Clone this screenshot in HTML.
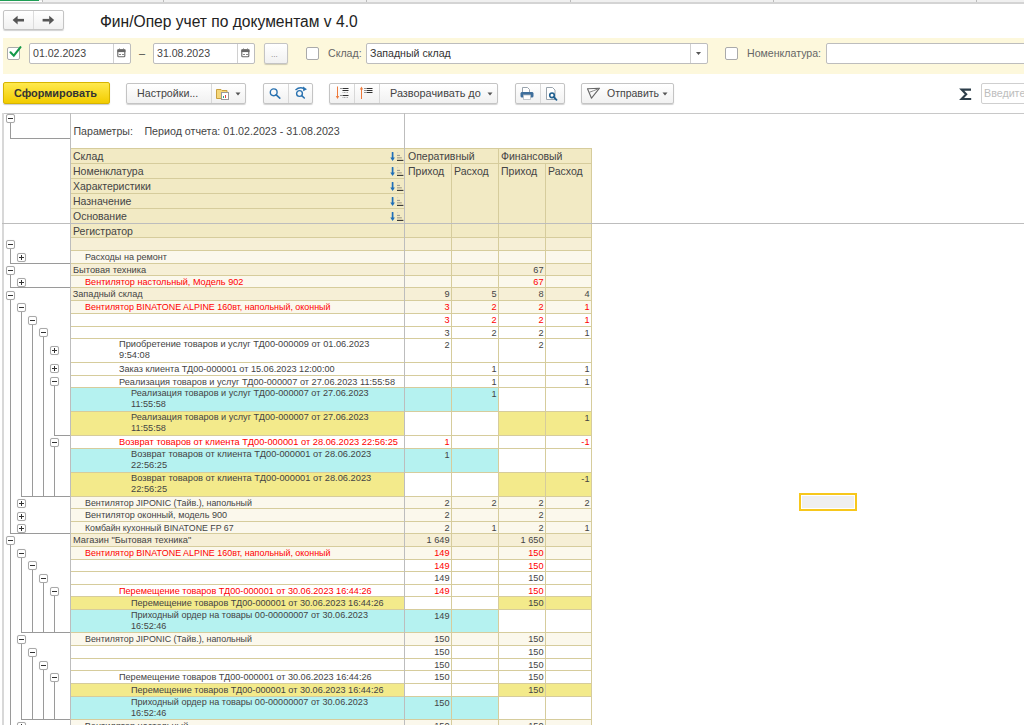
<!DOCTYPE html><html><head><meta charset="utf-8"><style>
html,body{margin:0;padding:0;width:1024px;height:725px;overflow:hidden;background:#fff;position:relative;font-family:"Liberation Sans",sans-serif;}
.a{position:absolute;box-sizing:border-box;}
.t{position:absolute;white-space:pre;line-height:1;}
.btn{position:absolute;box-sizing:border-box;border:1px solid #c4c4c4;border-radius:2px;background:linear-gradient(#ffffff,#f1f1f1);box-shadow:0 1px 1px rgba(0,0,0,0.18);}
.inp{position:absolute;box-sizing:border-box;border:1px solid #bdbdbd;border-radius:2px;background:#fff;}
.chk{position:absolute;box-sizing:border-box;border:1px solid #aaa;border-radius:2px;background:#fff;width:13px;height:13px;}
.tb{position:absolute;box-sizing:border-box;width:9px;height:9px;border:1px solid #a9a9a9;border-radius:2px;background:#fff;box-shadow:0 0 1px rgba(0,0,0,.15);}
.tb i{position:absolute;left:1px;top:3px;width:5px;height:1px;background:#333;}
.tb b{position:absolute;left:3px;top:1px;width:1px;height:5px;background:#333;}
</style></head><body>

<div class="a" style="left:0px;top:0px;width:1024px;height:2px;background:#f0f0f0;"></div>
<div class="a" style="left:0px;top:0px;width:39px;height:1.5px;background:#1f9e55;"></div>
<div class="a" style="left:0px;top:1px;width:42px;height:1px;background:#ffffff;"></div>
<div class="a" style="left:42px;top:0px;width:1px;height:3px;background:#bcbcbc;"></div>
<div class="a" style="left:163px;top:0px;width:1px;height:3px;background:#bcbcbc;"></div>
<div class="a" style="left:366px;top:0px;width:1px;height:3px;background:#bcbcbc;"></div>
<div class="a" style="left:570px;top:0px;width:1px;height:3px;background:#bcbcbc;"></div>
<div class="a" style="left:773px;top:0px;width:1px;height:3px;background:#bcbcbc;"></div>
<div class="a" style="left:976px;top:0px;width:1px;height:3px;background:#bcbcbc;"></div>
<div class="a" style="left:0px;top:2px;width:1024px;height:2px;background:#d4d4d4;"></div>
<div class="btn" style="left:3px;top:10px;width:61px;height:20px;"></div>
<div class="a" style="left:33px;top:11px;width:1px;height:18px;background:#dcdcdc;"></div>
<svg class="a" style="left:10px;top:14px" width="50" height="12" viewBox="0 0 50 12">
<path d="M2.6 6.1 L7.6 1.8 V10.4 Z" fill="#555"/><rect x="7" y="4.9" width="7" height="2.6" fill="#555"/>
<path d="M44.2 6.1 L39.2 1.8 V10.4 Z" fill="#555"/><rect x="32.6" y="4.9" width="7" height="2.6" fill="#555"/>
</svg>
<div class="t" style="left:100px;top:13.5px;font-size:15.6px;color:#222;">Фин/Опер учет по документам v 4.0</div>
<div class="a" style="left:3px;top:38px;width:1021px;height:36px;background:#fdf8dc;"></div>
<div class="chk" style="left:7px;top:47px;width:13px;height:13px;"></div>
<svg class="a" style="left:9px;top:44px" width="14" height="14" viewBox="0 0 14 14"><path d="M1.5 8.3 L4.8 11.7 L11.5 3.2" stroke="#14994a" stroke-width="2.1" fill="none" stroke-linecap="round"/></svg>
<div class="inp" style="left:29px;top:43px;width:102px;height:21px;"></div>
<div class="a" style="left:113px;top:44px;width:1px;height:19px;background:#d0d0d0;"></div>
<div class="t" style="left:33px;top:48px;font-size:10.6px;color:#444;">01.02.2023</div>
<div class="t" style="left:139px;top:48px;font-size:11px;color:#444;">–</div>
<div class="inp" style="left:153px;top:43px;width:102px;height:21px;"></div>
<div class="a" style="left:237px;top:44px;width:1px;height:19px;background:#d0d0d0;"></div>
<div class="t" style="left:157px;top:48px;font-size:10.6px;color:#444;">31.08.2023</div>
<svg class="a" style="left:117px;top:48px" width="9" height="10" viewBox="0 0 9 10"><rect x="0.8" y="1.8" width="7" height="7" rx="0.8" fill="#fff" stroke="#666" stroke-width="1.1"/><rect x="0.5" y="1.5" width="8" height="2.6" fill="#666"/><path d="M2.5 0.5V2M6.5 0.5V2" stroke="#777"/><path d="M2 6.5h2M5 6.5h2" stroke="#888" stroke-width="1"/></svg>
<svg class="a" style="left:241px;top:48px" width="9" height="10" viewBox="0 0 9 10"><rect x="0.8" y="1.8" width="7" height="7" rx="0.8" fill="#fff" stroke="#666" stroke-width="1.1"/><rect x="0.5" y="1.5" width="8" height="2.6" fill="#666"/><path d="M2.5 0.5V2M6.5 0.5V2" stroke="#777"/><path d="M2 6.5h2M5 6.5h2" stroke="#888" stroke-width="1"/></svg>
<div class="btn" style="left:264px;top:43px;width:24px;height:21px;"></div>
<div class="t" style="left:271px;top:51px;font-size:8px;color:#777;">...</div>
<div class="chk" style="left:306px;top:47px;"></div>
<div class="t" style="left:328px;top:48px;font-size:10.6px;color:#666;">Склад:</div>
<div class="inp" style="left:366px;top:43px;width:342px;height:21px;"></div>
<div class="a" style="left:690px;top:44px;width:1px;height:19px;background:#d0d0d0;"></div>
<div class="t" style="left:370px;top:48px;font-size:10.6px;color:#333;">Западный склад</div>
<svg class="a" style="left:696px;top:52px" width="5" height="3" viewBox="0 0 5 3"><path d="M0 0H5L2.5 3Z" fill="#555"/></svg>
<div class="chk" style="left:725px;top:47px;"></div>
<div class="t" style="left:747px;top:48px;font-size:10.6px;color:#666;">Номенклатура:</div>
<div class="inp" style="left:826px;top:43px;width:220px;height:21px;"></div>
<div class="a" style="left:3px;top:82px;width:107px;height:22px;border:1px solid #d6b400;border-radius:2px;background:linear-gradient(#ffe94d,#f2cc00);box-shadow:0 1px 1px rgba(0,0,0,.2)"></div>
<div class="t" style="left:14px;top:88px;font-size:10.9px;color:#333;font-weight:bold;">Сформировать</div>
<div class="btn" style="left:126px;top:83px;width:120px;height:21px;"></div>
<div class="a" style="left:211px;top:84px;width:1px;height:19px;background:#d8d8d8;"></div>
<div class="t" style="left:137px;top:88px;font-size:10.7px;color:#444;">Настройки...</div>
<svg class="a" style="left:216px;top:87px" width="14" height="13" viewBox="0 0 14 13"><path d="M0.5 2.5H5L6 3.5H11V11.5H0.5Z" fill="#f5d77a" stroke="#c9a040" stroke-width="1"/><rect x="5.5" y="5.5" width="7" height="7" fill="#fff" stroke="#999"/><rect x="7" y="9" width="1" height="2" fill="#2a8"/><rect x="9" y="8" width="1" height="3" fill="#d44"/></svg>
<svg class="a" style="left:235px;top:92px" width="6" height="4" viewBox="0 0 6 4"><path d="M0.5 0.5H5.5L3 3.5Z" fill="#555"/></svg>
<div class="btn" style="left:263px;top:83px;width:50px;height:21px;"></div>
<div class="a" style="left:288px;top:84px;width:1px;height:19px;background:#d8d8d8;"></div>
<svg class="a" style="left:268px;top:86px" width="14" height="14" viewBox="0 0 14 14"><circle cx="5.7" cy="6.3" r="3.4" fill="none" stroke="#2a72b0" stroke-width="1.4"/><path d="M8.2 8.8L11.8 12.2" stroke="#2a72b0" stroke-width="1.6" stroke-linecap="round"/></svg>
<svg class="a" style="left:293px;top:85px" width="16" height="15" viewBox="0 0 16 15"><circle cx="6.5" cy="8.5" r="2.9" fill="none" stroke="#2a72b0" stroke-width="1.4"/><path d="M8.7 10.7L11.3 13" stroke="#2a72b0" stroke-width="1.6" stroke-linecap="round"/><path d="M2.5 5 Q6.5 1.5 11 3.6" fill="none" stroke="#2a72b0" stroke-width="1.4"/><path d="M10 1.6L14 4.2L10.2 6.2Z" fill="#2a72b0"/></svg>
<div class="btn" style="left:329px;top:83px;width:169px;height:21px;"></div>
<div class="a" style="left:354px;top:84px;width:1px;height:19px;background:#d8d8d8;"></div>
<div class="a" style="left:379px;top:84px;width:1px;height:19px;background:#d8d8d8;"></div>
<svg class="a" style="left:334px;top:86px" width="16" height="15" viewBox="0 0 16 15"><path d="M3.5 0.5V11" stroke="#ee7a3c" stroke-width="1"/><path d="M1.8 10L3.5 13L5.2 10Z" fill="#ee7a3c"/><path d="M6.5 2.5h1M8.5 2.5h6M8.5 4.5h6M6.5 9.5h1M8.5 9.5h6" stroke="#333" stroke-width="1"/><path d="M8.5 6.5h6M8.5 11.5h6" stroke="#aaa" stroke-width="1" stroke-dasharray="1 0.5"/></svg>
<svg class="a" style="left:358px;top:86px" width="16" height="15" viewBox="0 0 16 15"><path d="M3.5 2V13" stroke="#ee7a3c" stroke-width="1"/><path d="M1.8 3.5L3.5 0.5L5.2 3.5Z" fill="#ee7a3c"/><path d="M6.5 2.5h1M8.5 2.5h6M6.5 4.5h1M8.5 4.5h6M6.5 6.5h1M8.5 6.5h6" stroke="#333" stroke-width="1"/></svg>
<div class="t" style="left:390px;top:88px;font-size:10.9px;color:#444;">Разворачивать до</div>
<svg class="a" style="left:487px;top:92px" width="6" height="4" viewBox="0 0 6 4"><path d="M0.5 0.5H5.5L3 3.5Z" fill="#555"/></svg>
<div class="btn" style="left:515px;top:83px;width:50px;height:21px;"></div>
<div class="a" style="left:540px;top:84px;width:1px;height:19px;background:#d8d8d8;"></div>
<svg class="a" style="left:520px;top:86px" width="14" height="14" viewBox="0 0 14 14"><path d="M2.5 6V1.5H7.5L9.5 3.5V6" fill="#fff" stroke="#9aa4ad" stroke-width="1"/><path d="M1 6.5H13V11H1Z" fill="#3f6f9c" rx="1"/><rect x="0.5" y="6" width="13" height="5.5" rx="1.6" fill="#3f6f9c"/><rect x="3.5" y="9" width="7" height="4.5" fill="#fff" stroke="#b5bcc2" stroke-width="0.8"/></svg>
<svg class="a" style="left:545px;top:86px" width="14" height="15" viewBox="0 0 14 15"><path d="M1.5 1.5H7.5L10 4V13.5H1.5Z" fill="#fff" stroke="#9aa4ad" stroke-width="1"/><circle cx="7" cy="9.3" r="2.3" fill="none" stroke="#1f5f8f" stroke-width="1.6"/><path d="M8.7 11L11.5 13.8" stroke="#1f5f8f" stroke-width="1.8" stroke-linecap="round"/></svg>
<div class="btn" style="left:581px;top:83px;width:93px;height:21px;"></div>
<svg class="a" style="left:586px;top:87px" width="15" height="13" viewBox="0 0 15 13"><path d="M1.5 1.8L13.5 1.2L5.5 11.2Z" fill="none" stroke="#666" stroke-width="1.1" stroke-linejoin="round"/><path d="M3.6 5.2Q7 4 13 1.5" fill="none" stroke="#777" stroke-width="0.9"/></svg>
<div class="t" style="left:607px;top:88px;font-size:10.5px;color:#444;">Отправить</div>
<svg class="a" style="left:662px;top:92px" width="6" height="4" viewBox="0 0 6 4"><path d="M0.5 0.5H5.5L3 3.5Z" fill="#555"/></svg>
<svg class="a" style="left:959px;top:87px" width="14" height="14" viewBox="0 0 14 14"><path d="M12 2.6H2.6L7.2 7.3L2.6 12H12.2" fill="none" stroke="#2d3e4a" stroke-width="2.1" stroke-linejoin="miter"/></svg>
<div class="inp" style="left:981px;top:83px;width:60px;height:21px;border-color:#cfcfcf"></div>
<div class="t" style="left:984px;top:88px;font-size:10.7px;color:#bdbdbd;">Введите</div>
<div class="a" style="left:2px;top:113px;width:1022px;height:1px;background:#c8c8c8;"></div>
<div class="a" style="left:2px;top:113px;width:2px;height:612px;background:#d8d8d8;"></div>
<div class="a" style="left:70px;top:113px;width:1px;height:612px;background:#bdbdbd;"></div>
<div class="a" style="left:404px;top:113px;width:1px;height:612px;background:#bdbdbd;"></div>
<div class="tb" style="left:6px;top:114px;"><i></i></div>
<div class="a" style="left:10px;top:123px;width:1px;height:15px;background:#9a9a9a;"></div>
<div class="a" style="left:10px;top:138px;width:60px;height:1px;background:#9a9a9a;"></div>
<div class="t" style="left:73.5px;top:125.5px;font-size:10.6px;color:#444;">Параметры:</div>
<div class="t" style="left:144.4px;top:125.5px;font-size:10.7px;color:#444;">Период отчета: 01.02.2023 - 31.08.2023</div>
<div class="a" style="left:71px;top:148px;width:333px;height:89px;background:#f2eac4;"></div>
<div class="a" style="left:405px;top:148px;width:186px;height:89px;background:#f2eac4;"></div>
<div class="a" style="left:71px;top:148px;width:333px;height:1px;background:#d6cc9c;"></div>
<div class="a" style="left:71px;top:163px;width:333px;height:1px;background:#d6cc9c;"></div>
<div class="a" style="left:71px;top:178px;width:333px;height:1px;background:#d6cc9c;"></div>
<div class="a" style="left:71px;top:193px;width:333px;height:1px;background:#d6cc9c;"></div>
<div class="a" style="left:71px;top:208px;width:333px;height:1px;background:#d6cc9c;"></div>
<div class="a" style="left:405px;top:148px;width:186px;height:1px;background:#d6cc9c;"></div>
<div class="a" style="left:405px;top:163px;width:186px;height:1px;background:#d6cc9c;"></div>
<div class="a" style="left:498px;top:148px;width:1px;height:89px;background:#d6cc9c;"></div>
<div class="a" style="left:451px;top:163px;width:1px;height:74px;background:#d6cc9c;"></div>
<div class="a" style="left:545px;top:163px;width:1px;height:74px;background:#d6cc9c;"></div>
<div class="a" style="left:591px;top:148px;width:1px;height:577px;background:#d6cc9c;"></div>
<div class="a" style="left:2px;top:223px;width:1022px;height:1px;background:#bdbdbd;"></div>
<div class="t" style="left:73px;top:150.5px;font-size:10.5px;color:#444;">Склад</div>
<svg class="a" style="left:389px;top:152px" width="15" height="10" viewBox="0 0 15 10"><path d="M3.6 0.7V6.5" stroke="#1f6fb8" stroke-width="1.7" stroke-linecap="round"/><path d="M1.3 5.6L3.6 8.9L5.9 5.6Z" fill="#1f6fb8"/><path d="M8 0.7h1.2" stroke="#ccc" stroke-width="0.9"/><path d="M8 3.4h3" stroke="#888" stroke-width="0.9"/><path d="M8 5.8h4.8" stroke="#b0a990" stroke-width="1.3"/><path d="M8 8.4h6.4" stroke="#333" stroke-width="1.1"/></svg>
<div class="t" style="left:73px;top:165.5px;font-size:10.5px;color:#444;">Номенклатура</div>
<svg class="a" style="left:389px;top:167px" width="15" height="10" viewBox="0 0 15 10"><path d="M3.6 0.7V6.5" stroke="#1f6fb8" stroke-width="1.7" stroke-linecap="round"/><path d="M1.3 5.6L3.6 8.9L5.9 5.6Z" fill="#1f6fb8"/><path d="M8 0.7h1.2" stroke="#ccc" stroke-width="0.9"/><path d="M8 3.4h3" stroke="#888" stroke-width="0.9"/><path d="M8 5.8h4.8" stroke="#b0a990" stroke-width="1.3"/><path d="M8 8.4h6.4" stroke="#333" stroke-width="1.1"/></svg>
<div class="t" style="left:73px;top:180.5px;font-size:10.5px;color:#444;">Характеристики</div>
<svg class="a" style="left:389px;top:182px" width="15" height="10" viewBox="0 0 15 10"><path d="M3.6 0.7V6.5" stroke="#1f6fb8" stroke-width="1.7" stroke-linecap="round"/><path d="M1.3 5.6L3.6 8.9L5.9 5.6Z" fill="#1f6fb8"/><path d="M8 0.7h1.2" stroke="#ccc" stroke-width="0.9"/><path d="M8 3.4h3" stroke="#888" stroke-width="0.9"/><path d="M8 5.8h4.8" stroke="#b0a990" stroke-width="1.3"/><path d="M8 8.4h6.4" stroke="#333" stroke-width="1.1"/></svg>
<div class="t" style="left:73px;top:195.5px;font-size:10.5px;color:#444;">Назначение</div>
<svg class="a" style="left:389px;top:197px" width="15" height="10" viewBox="0 0 15 10"><path d="M3.6 0.7V6.5" stroke="#1f6fb8" stroke-width="1.7" stroke-linecap="round"/><path d="M1.3 5.6L3.6 8.9L5.9 5.6Z" fill="#1f6fb8"/><path d="M8 0.7h1.2" stroke="#ccc" stroke-width="0.9"/><path d="M8 3.4h3" stroke="#888" stroke-width="0.9"/><path d="M8 5.8h4.8" stroke="#b0a990" stroke-width="1.3"/><path d="M8 8.4h6.4" stroke="#333" stroke-width="1.1"/></svg>
<div class="t" style="left:73px;top:210.5px;font-size:10.5px;color:#444;">Основание</div>
<svg class="a" style="left:389px;top:212px" width="15" height="10" viewBox="0 0 15 10"><path d="M3.6 0.7V6.5" stroke="#1f6fb8" stroke-width="1.7" stroke-linecap="round"/><path d="M1.3 5.6L3.6 8.9L5.9 5.6Z" fill="#1f6fb8"/><path d="M8 0.7h1.2" stroke="#ccc" stroke-width="0.9"/><path d="M8 3.4h3" stroke="#888" stroke-width="0.9"/><path d="M8 5.8h4.8" stroke="#b0a990" stroke-width="1.3"/><path d="M8 8.4h6.4" stroke="#333" stroke-width="1.1"/></svg>
<div class="t" style="left:408px;top:150.5px;font-size:10.5px;color:#444;">Оперативный</div>
<div class="t" style="left:501px;top:150.5px;font-size:10.5px;color:#444;">Финансовый</div>
<div class="t" style="left:408px;top:165.5px;font-size:10.5px;color:#444;">Приход</div>
<div class="t" style="left:454px;top:165.5px;font-size:10.5px;color:#444;">Расход</div>
<div class="t" style="left:501px;top:165.5px;font-size:10.5px;color:#444;">Приход</div>
<div class="t" style="left:548px;top:165.5px;font-size:10.5px;color:#444;">Расход</div>
<div class="t" style="left:73px;top:226px;font-size:10.5px;color:#444;">Регистратор</div>
<div class="a" style="left:71px;top:237px;width:333px;height:13px;background:#f6efd6;"></div>
<div class="a" style="left:405px;top:237px;width:46px;height:13px;background:#f6efd6;"></div>
<div class="a" style="left:452px;top:237px;width:46px;height:13px;background:#f6efd6;"></div>
<div class="a" style="left:499px;top:237px;width:46px;height:13px;background:#f6efd6;"></div>
<div class="a" style="left:546px;top:237px;width:45px;height:13px;background:#f6efd6;"></div>
<div class="a" style="left:71px;top:237px;width:333px;height:1px;background:#d6cc9c;"></div>
<div class="a" style="left:405px;top:237px;width:186px;height:1px;background:#d6cc9c;"></div>
<div class="a" style="left:451px;top:237px;width:1px;height:13px;background:#d6cc9c;"></div>
<div class="a" style="left:498px;top:237px;width:1px;height:13px;background:#d6cc9c;"></div>
<div class="a" style="left:545px;top:237px;width:1px;height:13px;background:#d6cc9c;"></div>
<div class="a" style="left:71px;top:250px;width:333px;height:13px;background:#fbf8ec;"></div>
<div class="a" style="left:405px;top:250px;width:46px;height:13px;background:#fbf8ec;"></div>
<div class="a" style="left:452px;top:250px;width:46px;height:13px;background:#fbf8ec;"></div>
<div class="a" style="left:499px;top:250px;width:46px;height:13px;background:#fbf8ec;"></div>
<div class="a" style="left:546px;top:250px;width:45px;height:13px;background:#fbf8ec;"></div>
<div class="a" style="left:71px;top:250px;width:333px;height:1px;background:#d6cc9c;"></div>
<div class="a" style="left:405px;top:250px;width:186px;height:1px;background:#d6cc9c;"></div>
<div class="a" style="left:451px;top:250px;width:1px;height:13px;background:#d6cc9c;"></div>
<div class="a" style="left:498px;top:250px;width:1px;height:13px;background:#d6cc9c;"></div>
<div class="a" style="left:545px;top:250px;width:1px;height:13px;background:#d6cc9c;"></div>
<div class="t" style="left:84.7px;top:252.8px;font-size:9.2px;color:#444444;transform:scale(0.9859,1.06);transform-origin:0 7.8px;">Расходы на ремонт</div>
<div class="a" style="left:71px;top:263px;width:333px;height:12px;background:#f6efd6;"></div>
<div class="a" style="left:405px;top:263px;width:46px;height:12px;background:#f6efd6;"></div>
<div class="a" style="left:452px;top:263px;width:46px;height:12px;background:#f6efd6;"></div>
<div class="a" style="left:499px;top:263px;width:46px;height:12px;background:#f6efd6;"></div>
<div class="a" style="left:546px;top:263px;width:45px;height:12px;background:#f6efd6;"></div>
<div class="a" style="left:71px;top:263px;width:333px;height:1px;background:#d6cc9c;"></div>
<div class="a" style="left:405px;top:263px;width:186px;height:1px;background:#d6cc9c;"></div>
<div class="a" style="left:451px;top:263px;width:1px;height:12px;background:#d6cc9c;"></div>
<div class="a" style="left:498px;top:263px;width:1px;height:12px;background:#d6cc9c;"></div>
<div class="a" style="left:545px;top:263px;width:1px;height:12px;background:#d6cc9c;"></div>
<div class="t" style="left:72.7px;top:265.8px;font-size:9.2px;color:#444444;transform:scale(1.0109,1.06);transform-origin:0 7.8px;">Бытовая техника</div>
<div class="t" style="left:499px;width:44.5px;top:265.8px;font-size:9.2px;color:#444444;text-align:right;transform:scaleY(1.06);transform-origin:0 7.8px">67</div>
<div class="a" style="left:71px;top:275px;width:333px;height:12px;background:#fbf8ec;"></div>
<div class="a" style="left:405px;top:275px;width:46px;height:12px;background:#fbf8ec;"></div>
<div class="a" style="left:452px;top:275px;width:46px;height:12px;background:#fbf8ec;"></div>
<div class="a" style="left:499px;top:275px;width:46px;height:12px;background:#fbf8ec;"></div>
<div class="a" style="left:546px;top:275px;width:45px;height:12px;background:#fbf8ec;"></div>
<div class="a" style="left:71px;top:275px;width:333px;height:1px;background:#d6cc9c;"></div>
<div class="a" style="left:405px;top:275px;width:186px;height:1px;background:#d6cc9c;"></div>
<div class="a" style="left:451px;top:275px;width:1px;height:12px;background:#d6cc9c;"></div>
<div class="a" style="left:498px;top:275px;width:1px;height:12px;background:#d6cc9c;"></div>
<div class="a" style="left:545px;top:275px;width:1px;height:12px;background:#d6cc9c;"></div>
<div class="t" style="left:84.7px;top:277.8px;font-size:9.2px;color:#ff0000;transform:scale(0.9924,1.06);transform-origin:0 7.8px;">Вентилятор настольный, Модель 902</div>
<div class="t" style="left:499px;width:44.5px;top:277.8px;font-size:9.2px;color:#ff0000;text-align:right;transform:scaleY(1.06);transform-origin:0 7.8px">67</div>
<div class="a" style="left:71px;top:287px;width:333px;height:13px;background:#f6efd6;"></div>
<div class="a" style="left:405px;top:287px;width:46px;height:13px;background:#f6efd6;"></div>
<div class="a" style="left:452px;top:287px;width:46px;height:13px;background:#f6efd6;"></div>
<div class="a" style="left:499px;top:287px;width:46px;height:13px;background:#f6efd6;"></div>
<div class="a" style="left:546px;top:287px;width:45px;height:13px;background:#f6efd6;"></div>
<div class="a" style="left:71px;top:287px;width:333px;height:1px;background:#d6cc9c;"></div>
<div class="a" style="left:405px;top:287px;width:186px;height:1px;background:#d6cc9c;"></div>
<div class="a" style="left:451px;top:287px;width:1px;height:13px;background:#d6cc9c;"></div>
<div class="a" style="left:498px;top:287px;width:1px;height:13px;background:#d6cc9c;"></div>
<div class="a" style="left:545px;top:287px;width:1px;height:13px;background:#d6cc9c;"></div>
<div class="t" style="left:72.7px;top:289.8px;font-size:9.2px;color:#444444;transform:scale(1.0000,1.06);transform-origin:0 7.8px;">Западный склад</div>
<div class="t" style="left:405px;width:44.5px;top:289.8px;font-size:9.2px;color:#444444;text-align:right;transform:scaleY(1.06);transform-origin:0 7.8px">9</div>
<div class="t" style="left:452px;width:44.5px;top:289.8px;font-size:9.2px;color:#444444;text-align:right;transform:scaleY(1.06);transform-origin:0 7.8px">5</div>
<div class="t" style="left:499px;width:44.5px;top:289.8px;font-size:9.2px;color:#444444;text-align:right;transform:scaleY(1.06);transform-origin:0 7.8px">8</div>
<div class="t" style="left:546px;width:43.5px;top:289.8px;font-size:9.2px;color:#444444;text-align:right;transform:scaleY(1.06);transform-origin:0 7.8px">4</div>
<div class="a" style="left:71px;top:300px;width:333px;height:13px;background:#fbf8ec;"></div>
<div class="a" style="left:405px;top:300px;width:46px;height:13px;background:#fbf8ec;"></div>
<div class="a" style="left:452px;top:300px;width:46px;height:13px;background:#fbf8ec;"></div>
<div class="a" style="left:499px;top:300px;width:46px;height:13px;background:#fbf8ec;"></div>
<div class="a" style="left:546px;top:300px;width:45px;height:13px;background:#fbf8ec;"></div>
<div class="a" style="left:71px;top:300px;width:333px;height:1px;background:#d6cc9c;"></div>
<div class="a" style="left:405px;top:300px;width:186px;height:1px;background:#d6cc9c;"></div>
<div class="a" style="left:451px;top:300px;width:1px;height:13px;background:#d6cc9c;"></div>
<div class="a" style="left:498px;top:300px;width:1px;height:13px;background:#d6cc9c;"></div>
<div class="a" style="left:545px;top:300px;width:1px;height:13px;background:#d6cc9c;"></div>
<div class="t" style="left:84.7px;top:302.8px;font-size:9.2px;color:#ff0000;transform:scale(0.9707,1.06);transform-origin:0 7.8px;">Вентилятор BINATONE ALPINE 160вт, напольный, оконный</div>
<div class="t" style="left:405px;width:44.5px;top:302.8px;font-size:9.2px;color:#ff0000;text-align:right;transform:scaleY(1.06);transform-origin:0 7.8px">3</div>
<div class="t" style="left:452px;width:44.5px;top:302.8px;font-size:9.2px;color:#ff0000;text-align:right;transform:scaleY(1.06);transform-origin:0 7.8px">2</div>
<div class="t" style="left:499px;width:44.5px;top:302.8px;font-size:9.2px;color:#ff0000;text-align:right;transform:scaleY(1.06);transform-origin:0 7.8px">2</div>
<div class="t" style="left:546px;width:43.5px;top:302.8px;font-size:9.2px;color:#ff0000;text-align:right;transform:scaleY(1.06);transform-origin:0 7.8px">1</div>
<div class="a" style="left:71px;top:313px;width:333px;height:13px;background:#ffffff;"></div>
<div class="a" style="left:405px;top:313px;width:46px;height:13px;background:#ffffff;"></div>
<div class="a" style="left:452px;top:313px;width:46px;height:13px;background:#ffffff;"></div>
<div class="a" style="left:499px;top:313px;width:46px;height:13px;background:#ffffff;"></div>
<div class="a" style="left:546px;top:313px;width:45px;height:13px;background:#ffffff;"></div>
<div class="a" style="left:71px;top:313px;width:333px;height:1px;background:#d6cc9c;"></div>
<div class="a" style="left:405px;top:313px;width:186px;height:1px;background:#d6cc9c;"></div>
<div class="a" style="left:451px;top:313px;width:1px;height:13px;background:#d6cc9c;"></div>
<div class="a" style="left:498px;top:313px;width:1px;height:13px;background:#d6cc9c;"></div>
<div class="a" style="left:545px;top:313px;width:1px;height:13px;background:#d6cc9c;"></div>
<div class="t" style="left:405px;width:44.5px;top:315.8px;font-size:9.2px;color:#ff0000;text-align:right;transform:scaleY(1.06);transform-origin:0 7.8px">3</div>
<div class="t" style="left:452px;width:44.5px;top:315.8px;font-size:9.2px;color:#ff0000;text-align:right;transform:scaleY(1.06);transform-origin:0 7.8px">2</div>
<div class="t" style="left:499px;width:44.5px;top:315.8px;font-size:9.2px;color:#ff0000;text-align:right;transform:scaleY(1.06);transform-origin:0 7.8px">2</div>
<div class="t" style="left:546px;width:43.5px;top:315.8px;font-size:9.2px;color:#ff0000;text-align:right;transform:scaleY(1.06);transform-origin:0 7.8px">1</div>
<div class="a" style="left:71px;top:326px;width:333px;height:12px;background:#ffffff;"></div>
<div class="a" style="left:405px;top:326px;width:46px;height:12px;background:#ffffff;"></div>
<div class="a" style="left:452px;top:326px;width:46px;height:12px;background:#ffffff;"></div>
<div class="a" style="left:499px;top:326px;width:46px;height:12px;background:#ffffff;"></div>
<div class="a" style="left:546px;top:326px;width:45px;height:12px;background:#ffffff;"></div>
<div class="a" style="left:71px;top:326px;width:333px;height:1px;background:#d6cc9c;"></div>
<div class="a" style="left:405px;top:326px;width:186px;height:1px;background:#d6cc9c;"></div>
<div class="a" style="left:451px;top:326px;width:1px;height:12px;background:#d6cc9c;"></div>
<div class="a" style="left:498px;top:326px;width:1px;height:12px;background:#d6cc9c;"></div>
<div class="a" style="left:545px;top:326px;width:1px;height:12px;background:#d6cc9c;"></div>
<div class="t" style="left:405px;width:44.5px;top:328.8px;font-size:9.2px;color:#444444;text-align:right;transform:scaleY(1.06);transform-origin:0 7.8px">3</div>
<div class="t" style="left:452px;width:44.5px;top:328.8px;font-size:9.2px;color:#444444;text-align:right;transform:scaleY(1.06);transform-origin:0 7.8px">2</div>
<div class="t" style="left:499px;width:44.5px;top:328.8px;font-size:9.2px;color:#444444;text-align:right;transform:scaleY(1.06);transform-origin:0 7.8px">2</div>
<div class="t" style="left:546px;width:43.5px;top:328.8px;font-size:9.2px;color:#444444;text-align:right;transform:scaleY(1.06);transform-origin:0 7.8px">1</div>
<div class="a" style="left:71px;top:338px;width:333px;height:24px;background:#ffffff;"></div>
<div class="a" style="left:405px;top:338px;width:46px;height:24px;background:#ffffff;"></div>
<div class="a" style="left:452px;top:338px;width:46px;height:24px;background:#ffffff;"></div>
<div class="a" style="left:499px;top:338px;width:46px;height:24px;background:#ffffff;"></div>
<div class="a" style="left:546px;top:338px;width:45px;height:24px;background:#ffffff;"></div>
<div class="a" style="left:71px;top:338px;width:333px;height:1px;background:#d6cc9c;"></div>
<div class="a" style="left:405px;top:338px;width:186px;height:1px;background:#d6cc9c;"></div>
<div class="a" style="left:451px;top:338px;width:1px;height:24px;background:#d6cc9c;"></div>
<div class="a" style="left:498px;top:338px;width:1px;height:24px;background:#d6cc9c;"></div>
<div class="a" style="left:545px;top:338px;width:1px;height:24px;background:#d6cc9c;"></div>
<div class="t" style="left:118.7px;top:339.5px;font-size:9.2px;color:#444444;transform:scale(1.0043,1.06);transform-origin:0 7.8px;">Приобретение товаров и услуг ТД00-000009 от 01.06.2023</div>
<div class="t" style="left:118.7px;top:351.4px;font-size:9.2px;color:#444444;transform:scale(1.0043,1.06);transform-origin:0 7.8px;">9:54:08</div>
<div class="t" style="left:405px;width:44.5px;top:340.8px;font-size:9.2px;color:#444444;text-align:right;transform:scaleY(1.06);transform-origin:0 7.8px">2</div>
<div class="t" style="left:499px;width:44.5px;top:340.8px;font-size:9.2px;color:#444444;text-align:right;transform:scaleY(1.06);transform-origin:0 7.8px">2</div>
<div class="a" style="left:71px;top:362px;width:333px;height:13px;background:#ffffff;"></div>
<div class="a" style="left:405px;top:362px;width:46px;height:13px;background:#ffffff;"></div>
<div class="a" style="left:452px;top:362px;width:46px;height:13px;background:#ffffff;"></div>
<div class="a" style="left:499px;top:362px;width:46px;height:13px;background:#ffffff;"></div>
<div class="a" style="left:546px;top:362px;width:45px;height:13px;background:#ffffff;"></div>
<div class="a" style="left:71px;top:362px;width:333px;height:1px;background:#d6cc9c;"></div>
<div class="a" style="left:405px;top:362px;width:186px;height:1px;background:#d6cc9c;"></div>
<div class="a" style="left:451px;top:362px;width:1px;height:13px;background:#d6cc9c;"></div>
<div class="a" style="left:498px;top:362px;width:1px;height:13px;background:#d6cc9c;"></div>
<div class="a" style="left:545px;top:362px;width:1px;height:13px;background:#d6cc9c;"></div>
<div class="t" style="left:118.7px;top:364.8px;font-size:9.2px;color:#444444;transform:scale(0.9924,1.06);transform-origin:0 7.8px;">Заказ клиента ТД00-000001 от 15.06.2023 12:00:00</div>
<div class="t" style="left:452px;width:44.5px;top:364.8px;font-size:9.2px;color:#444444;text-align:right;transform:scaleY(1.06);transform-origin:0 7.8px">1</div>
<div class="t" style="left:546px;width:43.5px;top:364.8px;font-size:9.2px;color:#444444;text-align:right;transform:scaleY(1.06);transform-origin:0 7.8px">1</div>
<div class="a" style="left:71px;top:375px;width:333px;height:12px;background:#ffffff;"></div>
<div class="a" style="left:405px;top:375px;width:46px;height:12px;background:#ffffff;"></div>
<div class="a" style="left:452px;top:375px;width:46px;height:12px;background:#ffffff;"></div>
<div class="a" style="left:499px;top:375px;width:46px;height:12px;background:#ffffff;"></div>
<div class="a" style="left:546px;top:375px;width:45px;height:12px;background:#ffffff;"></div>
<div class="a" style="left:71px;top:375px;width:333px;height:1px;background:#d6cc9c;"></div>
<div class="a" style="left:405px;top:375px;width:186px;height:1px;background:#d6cc9c;"></div>
<div class="a" style="left:451px;top:375px;width:1px;height:12px;background:#d6cc9c;"></div>
<div class="a" style="left:498px;top:375px;width:1px;height:12px;background:#d6cc9c;"></div>
<div class="a" style="left:545px;top:375px;width:1px;height:12px;background:#d6cc9c;"></div>
<div class="t" style="left:118.7px;top:377.8px;font-size:9.2px;color:#444444;transform:scale(0.9989,1.06);transform-origin:0 7.8px;">Реализация товаров и услуг ТД00-000007 от 27.06.2023 11:55:58</div>
<div class="t" style="left:452px;width:44.5px;top:377.8px;font-size:9.2px;color:#444444;text-align:right;transform:scaleY(1.06);transform-origin:0 7.8px">1</div>
<div class="t" style="left:546px;width:43.5px;top:377.8px;font-size:9.2px;color:#444444;text-align:right;transform:scaleY(1.06);transform-origin:0 7.8px">1</div>
<div class="a" style="left:71px;top:387px;width:333px;height:24px;background:#b5f2f0;"></div>
<div class="a" style="left:405px;top:387px;width:46px;height:24px;background:#b5f2f0;"></div>
<div class="a" style="left:452px;top:387px;width:46px;height:24px;background:#b5f2f0;"></div>
<div class="a" style="left:499px;top:387px;width:46px;height:24px;background:#ffffff;"></div>
<div class="a" style="left:546px;top:387px;width:45px;height:24px;background:#ffffff;"></div>
<div class="a" style="left:71px;top:387px;width:333px;height:1px;background:#d6cc9c;"></div>
<div class="a" style="left:405px;top:387px;width:186px;height:1px;background:#d6cc9c;"></div>
<div class="a" style="left:451px;top:387px;width:1px;height:24px;background:#d6cc9c;"></div>
<div class="a" style="left:498px;top:387px;width:1px;height:24px;background:#d6cc9c;"></div>
<div class="a" style="left:545px;top:387px;width:1px;height:24px;background:#d6cc9c;"></div>
<div class="t" style="left:130.7px;top:388.5px;font-size:9.2px;color:#444444;transform:scale(0.9957,1.06);transform-origin:0 7.8px;">Реализация товаров и услуг ТД00-000007 от 27.06.2023</div>
<div class="t" style="left:130.7px;top:400.4px;font-size:9.2px;color:#444444;transform:scale(0.9957,1.06);transform-origin:0 7.8px;">11:55:58</div>
<div class="t" style="left:452px;width:44.5px;top:389.8px;font-size:9.2px;color:#444444;text-align:right;transform:scaleY(1.06);transform-origin:0 7.8px">1</div>
<div class="a" style="left:71px;top:411px;width:333px;height:24px;background:#f3ea8b;"></div>
<div class="a" style="left:405px;top:411px;width:46px;height:24px;background:#ffffff;"></div>
<div class="a" style="left:452px;top:411px;width:46px;height:24px;background:#ffffff;"></div>
<div class="a" style="left:499px;top:411px;width:46px;height:24px;background:#f3ea8b;"></div>
<div class="a" style="left:546px;top:411px;width:45px;height:24px;background:#f3ea8b;"></div>
<div class="a" style="left:71px;top:411px;width:333px;height:1px;background:#d6cc9c;"></div>
<div class="a" style="left:405px;top:411px;width:186px;height:1px;background:#d6cc9c;"></div>
<div class="a" style="left:451px;top:411px;width:1px;height:24px;background:#d6cc9c;"></div>
<div class="a" style="left:498px;top:411px;width:1px;height:24px;background:#d6cc9c;"></div>
<div class="a" style="left:545px;top:411px;width:1px;height:24px;background:#d6cc9c;"></div>
<div class="t" style="left:130.7px;top:412.5px;font-size:9.2px;color:#444444;transform:scale(0.9957,1.06);transform-origin:0 7.8px;">Реализация товаров и услуг ТД00-000007 от 27.06.2023</div>
<div class="t" style="left:130.7px;top:424.4px;font-size:9.2px;color:#444444;transform:scale(0.9957,1.06);transform-origin:0 7.8px;">11:55:58</div>
<div class="t" style="left:546px;width:43.5px;top:413.8px;font-size:9.2px;color:#444444;text-align:right;transform:scaleY(1.06);transform-origin:0 7.8px">1</div>
<div class="a" style="left:71px;top:435px;width:333px;height:13px;background:#ffffff;"></div>
<div class="a" style="left:405px;top:435px;width:46px;height:13px;background:#ffffff;"></div>
<div class="a" style="left:452px;top:435px;width:46px;height:13px;background:#ffffff;"></div>
<div class="a" style="left:499px;top:435px;width:46px;height:13px;background:#ffffff;"></div>
<div class="a" style="left:546px;top:435px;width:45px;height:13px;background:#ffffff;"></div>
<div class="a" style="left:71px;top:435px;width:333px;height:1px;background:#d6cc9c;"></div>
<div class="a" style="left:405px;top:435px;width:186px;height:1px;background:#d6cc9c;"></div>
<div class="a" style="left:451px;top:435px;width:1px;height:13px;background:#d6cc9c;"></div>
<div class="a" style="left:498px;top:435px;width:1px;height:13px;background:#d6cc9c;"></div>
<div class="a" style="left:545px;top:435px;width:1px;height:13px;background:#d6cc9c;"></div>
<div class="t" style="left:118.7px;top:437.8px;font-size:9.2px;color:#ff0000;transform:scale(1.0109,1.06);transform-origin:0 7.8px;">Возврат товаров от клиента ТД00-000001 от 28.06.2023 22:56:25</div>
<div class="t" style="left:405px;width:44.5px;top:437.8px;font-size:9.2px;color:#ff0000;text-align:right;transform:scaleY(1.06);transform-origin:0 7.8px">1</div>
<div class="t" style="left:546px;width:43.5px;top:437.8px;font-size:9.2px;color:#ff0000;text-align:right;transform:scaleY(1.06);transform-origin:0 7.8px">-1</div>
<div class="a" style="left:71px;top:448px;width:333px;height:24px;background:#b5f2f0;"></div>
<div class="a" style="left:405px;top:448px;width:46px;height:24px;background:#b5f2f0;"></div>
<div class="a" style="left:452px;top:448px;width:46px;height:24px;background:#b5f2f0;"></div>
<div class="a" style="left:499px;top:448px;width:46px;height:24px;background:#ffffff;"></div>
<div class="a" style="left:546px;top:448px;width:45px;height:24px;background:#ffffff;"></div>
<div class="a" style="left:71px;top:448px;width:333px;height:1px;background:#d6cc9c;"></div>
<div class="a" style="left:405px;top:448px;width:186px;height:1px;background:#d6cc9c;"></div>
<div class="a" style="left:451px;top:448px;width:1px;height:24px;background:#d6cc9c;"></div>
<div class="a" style="left:498px;top:448px;width:1px;height:24px;background:#d6cc9c;"></div>
<div class="a" style="left:545px;top:448px;width:1px;height:24px;background:#d6cc9c;"></div>
<div class="t" style="left:130.7px;top:449.5px;font-size:9.2px;color:#444444;transform:scale(1.0109,1.06);transform-origin:0 7.8px;">Возврат товаров от клиента ТД00-000001 от 28.06.2023</div>
<div class="t" style="left:130.7px;top:461.4px;font-size:9.2px;color:#444444;transform:scale(1.0109,1.06);transform-origin:0 7.8px;">22:56:25</div>
<div class="t" style="left:405px;width:44.5px;top:450.8px;font-size:9.2px;color:#444444;text-align:right;transform:scaleY(1.06);transform-origin:0 7.8px">1</div>
<div class="a" style="left:71px;top:472px;width:333px;height:24px;background:#f3ea8b;"></div>
<div class="a" style="left:405px;top:472px;width:46px;height:24px;background:#ffffff;"></div>
<div class="a" style="left:452px;top:472px;width:46px;height:24px;background:#ffffff;"></div>
<div class="a" style="left:499px;top:472px;width:46px;height:24px;background:#f3ea8b;"></div>
<div class="a" style="left:546px;top:472px;width:45px;height:24px;background:#f3ea8b;"></div>
<div class="a" style="left:71px;top:472px;width:333px;height:1px;background:#d6cc9c;"></div>
<div class="a" style="left:405px;top:472px;width:186px;height:1px;background:#d6cc9c;"></div>
<div class="a" style="left:451px;top:472px;width:1px;height:24px;background:#d6cc9c;"></div>
<div class="a" style="left:498px;top:472px;width:1px;height:24px;background:#d6cc9c;"></div>
<div class="a" style="left:545px;top:472px;width:1px;height:24px;background:#d6cc9c;"></div>
<div class="t" style="left:130.7px;top:473.5px;font-size:9.2px;color:#444444;transform:scale(1.0109,1.06);transform-origin:0 7.8px;">Возврат товаров от клиента ТД00-000001 от 28.06.2023</div>
<div class="t" style="left:130.7px;top:485.4px;font-size:9.2px;color:#444444;transform:scale(1.0109,1.06);transform-origin:0 7.8px;">22:56:25</div>
<div class="t" style="left:546px;width:43.5px;top:474.8px;font-size:9.2px;color:#444444;text-align:right;transform:scaleY(1.06);transform-origin:0 7.8px">-1</div>
<div class="a" style="left:71px;top:496px;width:333px;height:12px;background:#fbf8ec;"></div>
<div class="a" style="left:405px;top:496px;width:46px;height:12px;background:#fbf8ec;"></div>
<div class="a" style="left:452px;top:496px;width:46px;height:12px;background:#fbf8ec;"></div>
<div class="a" style="left:499px;top:496px;width:46px;height:12px;background:#fbf8ec;"></div>
<div class="a" style="left:546px;top:496px;width:45px;height:12px;background:#fbf8ec;"></div>
<div class="a" style="left:71px;top:496px;width:333px;height:1px;background:#d6cc9c;"></div>
<div class="a" style="left:405px;top:496px;width:186px;height:1px;background:#d6cc9c;"></div>
<div class="a" style="left:451px;top:496px;width:1px;height:12px;background:#d6cc9c;"></div>
<div class="a" style="left:498px;top:496px;width:1px;height:12px;background:#d6cc9c;"></div>
<div class="a" style="left:545px;top:496px;width:1px;height:12px;background:#d6cc9c;"></div>
<div class="t" style="left:84.7px;top:498.8px;font-size:9.2px;color:#444444;transform:scale(0.9663,1.06);transform-origin:0 7.8px;">Вентилятор JIPONIC (Тайв.), напольный</div>
<div class="t" style="left:405px;width:44.5px;top:498.8px;font-size:9.2px;color:#444444;text-align:right;transform:scaleY(1.06);transform-origin:0 7.8px">2</div>
<div class="t" style="left:452px;width:44.5px;top:498.8px;font-size:9.2px;color:#444444;text-align:right;transform:scaleY(1.06);transform-origin:0 7.8px">2</div>
<div class="t" style="left:499px;width:44.5px;top:498.8px;font-size:9.2px;color:#444444;text-align:right;transform:scaleY(1.06);transform-origin:0 7.8px">2</div>
<div class="t" style="left:546px;width:43.5px;top:498.8px;font-size:9.2px;color:#444444;text-align:right;transform:scaleY(1.06);transform-origin:0 7.8px">2</div>
<div class="a" style="left:71px;top:508px;width:333px;height:13px;background:#fbf8ec;"></div>
<div class="a" style="left:405px;top:508px;width:46px;height:13px;background:#fbf8ec;"></div>
<div class="a" style="left:452px;top:508px;width:46px;height:13px;background:#fbf8ec;"></div>
<div class="a" style="left:499px;top:508px;width:46px;height:13px;background:#fbf8ec;"></div>
<div class="a" style="left:546px;top:508px;width:45px;height:13px;background:#fbf8ec;"></div>
<div class="a" style="left:71px;top:508px;width:333px;height:1px;background:#d6cc9c;"></div>
<div class="a" style="left:405px;top:508px;width:186px;height:1px;background:#d6cc9c;"></div>
<div class="a" style="left:451px;top:508px;width:1px;height:13px;background:#d6cc9c;"></div>
<div class="a" style="left:498px;top:508px;width:1px;height:13px;background:#d6cc9c;"></div>
<div class="a" style="left:545px;top:508px;width:1px;height:13px;background:#d6cc9c;"></div>
<div class="t" style="left:84.7px;top:510.8px;font-size:9.2px;color:#444444;transform:scale(0.9891,1.06);transform-origin:0 7.8px;">Вентилятор оконный, модель 900</div>
<div class="t" style="left:405px;width:44.5px;top:510.8px;font-size:9.2px;color:#444444;text-align:right;transform:scaleY(1.06);transform-origin:0 7.8px">2</div>
<div class="t" style="left:499px;width:44.5px;top:510.8px;font-size:9.2px;color:#444444;text-align:right;transform:scaleY(1.06);transform-origin:0 7.8px">2</div>
<div class="a" style="left:71px;top:521px;width:333px;height:12px;background:#fbf8ec;"></div>
<div class="a" style="left:405px;top:521px;width:46px;height:12px;background:#fbf8ec;"></div>
<div class="a" style="left:452px;top:521px;width:46px;height:12px;background:#fbf8ec;"></div>
<div class="a" style="left:499px;top:521px;width:46px;height:12px;background:#fbf8ec;"></div>
<div class="a" style="left:546px;top:521px;width:45px;height:12px;background:#fbf8ec;"></div>
<div class="a" style="left:71px;top:521px;width:333px;height:1px;background:#d6cc9c;"></div>
<div class="a" style="left:405px;top:521px;width:186px;height:1px;background:#d6cc9c;"></div>
<div class="a" style="left:451px;top:521px;width:1px;height:12px;background:#d6cc9c;"></div>
<div class="a" style="left:498px;top:521px;width:1px;height:12px;background:#d6cc9c;"></div>
<div class="a" style="left:545px;top:521px;width:1px;height:12px;background:#d6cc9c;"></div>
<div class="t" style="left:84.7px;top:523.8px;font-size:9.2px;color:#444444;transform:scale(0.9565,1.06);transform-origin:0 7.8px;">Комбайн кухонный BINATONE FP 67</div>
<div class="t" style="left:405px;width:44.5px;top:523.8px;font-size:9.2px;color:#444444;text-align:right;transform:scaleY(1.06);transform-origin:0 7.8px">2</div>
<div class="t" style="left:452px;width:44.5px;top:523.8px;font-size:9.2px;color:#444444;text-align:right;transform:scaleY(1.06);transform-origin:0 7.8px">1</div>
<div class="t" style="left:499px;width:44.5px;top:523.8px;font-size:9.2px;color:#444444;text-align:right;transform:scaleY(1.06);transform-origin:0 7.8px">2</div>
<div class="t" style="left:546px;width:43.5px;top:523.8px;font-size:9.2px;color:#444444;text-align:right;transform:scaleY(1.06);transform-origin:0 7.8px">1</div>
<div class="a" style="left:71px;top:533px;width:333px;height:13px;background:#f6efd6;"></div>
<div class="a" style="left:405px;top:533px;width:46px;height:13px;background:#f6efd6;"></div>
<div class="a" style="left:452px;top:533px;width:46px;height:13px;background:#f6efd6;"></div>
<div class="a" style="left:499px;top:533px;width:46px;height:13px;background:#f6efd6;"></div>
<div class="a" style="left:546px;top:533px;width:45px;height:13px;background:#f6efd6;"></div>
<div class="a" style="left:71px;top:533px;width:333px;height:1px;background:#d6cc9c;"></div>
<div class="a" style="left:405px;top:533px;width:186px;height:1px;background:#d6cc9c;"></div>
<div class="a" style="left:451px;top:533px;width:1px;height:13px;background:#d6cc9c;"></div>
<div class="a" style="left:498px;top:533px;width:1px;height:13px;background:#d6cc9c;"></div>
<div class="a" style="left:545px;top:533px;width:1px;height:13px;background:#d6cc9c;"></div>
<div class="t" style="left:72.7px;top:535.8px;font-size:9.2px;color:#444444;transform:scale(1.0109,1.06);transform-origin:0 7.8px;">Магазин "Бытовая техника"</div>
<div class="t" style="left:405px;width:44.5px;top:535.8px;font-size:9.2px;color:#444444;text-align:right;transform:scaleY(1.06);transform-origin:0 7.8px">1 649</div>
<div class="t" style="left:499px;width:44.5px;top:535.8px;font-size:9.2px;color:#444444;text-align:right;transform:scaleY(1.06);transform-origin:0 7.8px">1 650</div>
<div class="a" style="left:71px;top:546px;width:333px;height:13px;background:#fbf8ec;"></div>
<div class="a" style="left:405px;top:546px;width:46px;height:13px;background:#fbf8ec;"></div>
<div class="a" style="left:452px;top:546px;width:46px;height:13px;background:#fbf8ec;"></div>
<div class="a" style="left:499px;top:546px;width:46px;height:13px;background:#fbf8ec;"></div>
<div class="a" style="left:546px;top:546px;width:45px;height:13px;background:#fbf8ec;"></div>
<div class="a" style="left:71px;top:546px;width:333px;height:1px;background:#d6cc9c;"></div>
<div class="a" style="left:405px;top:546px;width:186px;height:1px;background:#d6cc9c;"></div>
<div class="a" style="left:451px;top:546px;width:1px;height:13px;background:#d6cc9c;"></div>
<div class="a" style="left:498px;top:546px;width:1px;height:13px;background:#d6cc9c;"></div>
<div class="a" style="left:545px;top:546px;width:1px;height:13px;background:#d6cc9c;"></div>
<div class="t" style="left:84.7px;top:548.8px;font-size:9.2px;color:#ff0000;transform:scale(0.9707,1.06);transform-origin:0 7.8px;">Вентилятор BINATONE ALPINE 160вт, напольный, оконный</div>
<div class="t" style="left:405px;width:44.5px;top:548.8px;font-size:9.2px;color:#ff0000;text-align:right;transform:scaleY(1.06);transform-origin:0 7.8px">149</div>
<div class="t" style="left:499px;width:44.5px;top:548.8px;font-size:9.2px;color:#ff0000;text-align:right;transform:scaleY(1.06);transform-origin:0 7.8px">150</div>
<div class="a" style="left:71px;top:559px;width:333px;height:12px;background:#ffffff;"></div>
<div class="a" style="left:405px;top:559px;width:46px;height:12px;background:#ffffff;"></div>
<div class="a" style="left:452px;top:559px;width:46px;height:12px;background:#ffffff;"></div>
<div class="a" style="left:499px;top:559px;width:46px;height:12px;background:#ffffff;"></div>
<div class="a" style="left:546px;top:559px;width:45px;height:12px;background:#ffffff;"></div>
<div class="a" style="left:71px;top:559px;width:333px;height:1px;background:#d6cc9c;"></div>
<div class="a" style="left:405px;top:559px;width:186px;height:1px;background:#d6cc9c;"></div>
<div class="a" style="left:451px;top:559px;width:1px;height:12px;background:#d6cc9c;"></div>
<div class="a" style="left:498px;top:559px;width:1px;height:12px;background:#d6cc9c;"></div>
<div class="a" style="left:545px;top:559px;width:1px;height:12px;background:#d6cc9c;"></div>
<div class="t" style="left:405px;width:44.5px;top:561.8px;font-size:9.2px;color:#ff0000;text-align:right;transform:scaleY(1.06);transform-origin:0 7.8px">149</div>
<div class="t" style="left:499px;width:44.5px;top:561.8px;font-size:9.2px;color:#ff0000;text-align:right;transform:scaleY(1.06);transform-origin:0 7.8px">150</div>
<div class="a" style="left:71px;top:571px;width:333px;height:13px;background:#ffffff;"></div>
<div class="a" style="left:405px;top:571px;width:46px;height:13px;background:#ffffff;"></div>
<div class="a" style="left:452px;top:571px;width:46px;height:13px;background:#ffffff;"></div>
<div class="a" style="left:499px;top:571px;width:46px;height:13px;background:#ffffff;"></div>
<div class="a" style="left:546px;top:571px;width:45px;height:13px;background:#ffffff;"></div>
<div class="a" style="left:71px;top:571px;width:333px;height:1px;background:#d6cc9c;"></div>
<div class="a" style="left:405px;top:571px;width:186px;height:1px;background:#d6cc9c;"></div>
<div class="a" style="left:451px;top:571px;width:1px;height:13px;background:#d6cc9c;"></div>
<div class="a" style="left:498px;top:571px;width:1px;height:13px;background:#d6cc9c;"></div>
<div class="a" style="left:545px;top:571px;width:1px;height:13px;background:#d6cc9c;"></div>
<div class="t" style="left:405px;width:44.5px;top:573.8px;font-size:9.2px;color:#444444;text-align:right;transform:scaleY(1.06);transform-origin:0 7.8px">149</div>
<div class="t" style="left:499px;width:44.5px;top:573.8px;font-size:9.2px;color:#444444;text-align:right;transform:scaleY(1.06);transform-origin:0 7.8px">150</div>
<div class="a" style="left:71px;top:584px;width:333px;height:12px;background:#ffffff;"></div>
<div class="a" style="left:405px;top:584px;width:46px;height:12px;background:#ffffff;"></div>
<div class="a" style="left:452px;top:584px;width:46px;height:12px;background:#ffffff;"></div>
<div class="a" style="left:499px;top:584px;width:46px;height:12px;background:#ffffff;"></div>
<div class="a" style="left:546px;top:584px;width:45px;height:12px;background:#ffffff;"></div>
<div class="a" style="left:71px;top:584px;width:333px;height:1px;background:#d6cc9c;"></div>
<div class="a" style="left:405px;top:584px;width:186px;height:1px;background:#d6cc9c;"></div>
<div class="a" style="left:451px;top:584px;width:1px;height:12px;background:#d6cc9c;"></div>
<div class="a" style="left:498px;top:584px;width:1px;height:12px;background:#d6cc9c;"></div>
<div class="a" style="left:545px;top:584px;width:1px;height:12px;background:#d6cc9c;"></div>
<div class="t" style="left:118.7px;top:586.8px;font-size:9.2px;color:#ff0000;transform:scale(0.9924,1.06);transform-origin:0 7.8px;">Перемещение товаров ТД00-000001 от 30.06.2023 16:44:26</div>
<div class="t" style="left:405px;width:44.5px;top:586.8px;font-size:9.2px;color:#ff0000;text-align:right;transform:scaleY(1.06);transform-origin:0 7.8px">149</div>
<div class="t" style="left:499px;width:44.5px;top:586.8px;font-size:9.2px;color:#ff0000;text-align:right;transform:scaleY(1.06);transform-origin:0 7.8px">150</div>
<div class="a" style="left:71px;top:596px;width:333px;height:13px;background:#f3ea8b;"></div>
<div class="a" style="left:405px;top:596px;width:46px;height:13px;background:#ffffff;"></div>
<div class="a" style="left:452px;top:596px;width:46px;height:13px;background:#ffffff;"></div>
<div class="a" style="left:499px;top:596px;width:46px;height:13px;background:#f3ea8b;"></div>
<div class="a" style="left:546px;top:596px;width:45px;height:13px;background:#f3ea8b;"></div>
<div class="a" style="left:71px;top:596px;width:333px;height:1px;background:#d6cc9c;"></div>
<div class="a" style="left:405px;top:596px;width:186px;height:1px;background:#d6cc9c;"></div>
<div class="a" style="left:451px;top:596px;width:1px;height:13px;background:#d6cc9c;"></div>
<div class="a" style="left:498px;top:596px;width:1px;height:13px;background:#d6cc9c;"></div>
<div class="a" style="left:545px;top:596px;width:1px;height:13px;background:#d6cc9c;"></div>
<div class="t" style="left:130.7px;top:598.8px;font-size:9.2px;color:#444444;transform:scale(0.9924,1.06);transform-origin:0 7.8px;">Перемещение товаров ТД00-000001 от 30.06.2023 16:44:26</div>
<div class="t" style="left:499px;width:44.5px;top:598.8px;font-size:9.2px;color:#444444;text-align:right;transform:scaleY(1.06);transform-origin:0 7.8px">150</div>
<div class="a" style="left:71px;top:609px;width:333px;height:23px;background:#b5f2f0;"></div>
<div class="a" style="left:405px;top:609px;width:46px;height:23px;background:#b5f2f0;"></div>
<div class="a" style="left:452px;top:609px;width:46px;height:23px;background:#b5f2f0;"></div>
<div class="a" style="left:499px;top:609px;width:46px;height:23px;background:#ffffff;"></div>
<div class="a" style="left:546px;top:609px;width:45px;height:23px;background:#ffffff;"></div>
<div class="a" style="left:71px;top:609px;width:333px;height:1px;background:#d6cc9c;"></div>
<div class="a" style="left:405px;top:609px;width:186px;height:1px;background:#d6cc9c;"></div>
<div class="a" style="left:451px;top:609px;width:1px;height:23px;background:#d6cc9c;"></div>
<div class="a" style="left:498px;top:609px;width:1px;height:23px;background:#d6cc9c;"></div>
<div class="a" style="left:545px;top:609px;width:1px;height:23px;background:#d6cc9c;"></div>
<div class="t" style="left:130.7px;top:610.5px;font-size:9.2px;color:#444444;transform:scale(0.9891,1.06);transform-origin:0 7.8px;">Приходный ордер на товары 00-00000007 от 30.06.2023</div>
<div class="t" style="left:130.7px;top:622.4px;font-size:9.2px;color:#444444;transform:scale(0.9891,1.06);transform-origin:0 7.8px;">16:52:46</div>
<div class="t" style="left:405px;width:44.5px;top:611.8px;font-size:9.2px;color:#444444;text-align:right;transform:scaleY(1.06);transform-origin:0 7.8px">149</div>
<div class="a" style="left:71px;top:632px;width:333px;height:13px;background:#fbf8ec;"></div>
<div class="a" style="left:405px;top:632px;width:46px;height:13px;background:#fbf8ec;"></div>
<div class="a" style="left:452px;top:632px;width:46px;height:13px;background:#fbf8ec;"></div>
<div class="a" style="left:499px;top:632px;width:46px;height:13px;background:#fbf8ec;"></div>
<div class="a" style="left:546px;top:632px;width:45px;height:13px;background:#fbf8ec;"></div>
<div class="a" style="left:71px;top:632px;width:333px;height:1px;background:#d6cc9c;"></div>
<div class="a" style="left:405px;top:632px;width:186px;height:1px;background:#d6cc9c;"></div>
<div class="a" style="left:451px;top:632px;width:1px;height:13px;background:#d6cc9c;"></div>
<div class="a" style="left:498px;top:632px;width:1px;height:13px;background:#d6cc9c;"></div>
<div class="a" style="left:545px;top:632px;width:1px;height:13px;background:#d6cc9c;"></div>
<div class="t" style="left:84.7px;top:634.8px;font-size:9.2px;color:#444444;transform:scale(0.9663,1.06);transform-origin:0 7.8px;">Вентилятор JIPONIC (Тайв.), напольный</div>
<div class="t" style="left:405px;width:44.5px;top:634.8px;font-size:9.2px;color:#444444;text-align:right;transform:scaleY(1.06);transform-origin:0 7.8px">150</div>
<div class="t" style="left:499px;width:44.5px;top:634.8px;font-size:9.2px;color:#444444;text-align:right;transform:scaleY(1.06);transform-origin:0 7.8px">150</div>
<div class="a" style="left:71px;top:645px;width:333px;height:13px;background:#ffffff;"></div>
<div class="a" style="left:405px;top:645px;width:46px;height:13px;background:#ffffff;"></div>
<div class="a" style="left:452px;top:645px;width:46px;height:13px;background:#ffffff;"></div>
<div class="a" style="left:499px;top:645px;width:46px;height:13px;background:#ffffff;"></div>
<div class="a" style="left:546px;top:645px;width:45px;height:13px;background:#ffffff;"></div>
<div class="a" style="left:71px;top:645px;width:333px;height:1px;background:#d6cc9c;"></div>
<div class="a" style="left:405px;top:645px;width:186px;height:1px;background:#d6cc9c;"></div>
<div class="a" style="left:451px;top:645px;width:1px;height:13px;background:#d6cc9c;"></div>
<div class="a" style="left:498px;top:645px;width:1px;height:13px;background:#d6cc9c;"></div>
<div class="a" style="left:545px;top:645px;width:1px;height:13px;background:#d6cc9c;"></div>
<div class="t" style="left:405px;width:44.5px;top:647.8px;font-size:9.2px;color:#444444;text-align:right;transform:scaleY(1.06);transform-origin:0 7.8px">150</div>
<div class="t" style="left:499px;width:44.5px;top:647.8px;font-size:9.2px;color:#444444;text-align:right;transform:scaleY(1.06);transform-origin:0 7.8px">150</div>
<div class="a" style="left:71px;top:658px;width:333px;height:12px;background:#ffffff;"></div>
<div class="a" style="left:405px;top:658px;width:46px;height:12px;background:#ffffff;"></div>
<div class="a" style="left:452px;top:658px;width:46px;height:12px;background:#ffffff;"></div>
<div class="a" style="left:499px;top:658px;width:46px;height:12px;background:#ffffff;"></div>
<div class="a" style="left:546px;top:658px;width:45px;height:12px;background:#ffffff;"></div>
<div class="a" style="left:71px;top:658px;width:333px;height:1px;background:#d6cc9c;"></div>
<div class="a" style="left:405px;top:658px;width:186px;height:1px;background:#d6cc9c;"></div>
<div class="a" style="left:451px;top:658px;width:1px;height:12px;background:#d6cc9c;"></div>
<div class="a" style="left:498px;top:658px;width:1px;height:12px;background:#d6cc9c;"></div>
<div class="a" style="left:545px;top:658px;width:1px;height:12px;background:#d6cc9c;"></div>
<div class="t" style="left:405px;width:44.5px;top:660.8px;font-size:9.2px;color:#444444;text-align:right;transform:scaleY(1.06);transform-origin:0 7.8px">150</div>
<div class="t" style="left:499px;width:44.5px;top:660.8px;font-size:9.2px;color:#444444;text-align:right;transform:scaleY(1.06);transform-origin:0 7.8px">150</div>
<div class="a" style="left:71px;top:670px;width:333px;height:13px;background:#ffffff;"></div>
<div class="a" style="left:405px;top:670px;width:46px;height:13px;background:#ffffff;"></div>
<div class="a" style="left:452px;top:670px;width:46px;height:13px;background:#ffffff;"></div>
<div class="a" style="left:499px;top:670px;width:46px;height:13px;background:#ffffff;"></div>
<div class="a" style="left:546px;top:670px;width:45px;height:13px;background:#ffffff;"></div>
<div class="a" style="left:71px;top:670px;width:333px;height:1px;background:#d6cc9c;"></div>
<div class="a" style="left:405px;top:670px;width:186px;height:1px;background:#d6cc9c;"></div>
<div class="a" style="left:451px;top:670px;width:1px;height:13px;background:#d6cc9c;"></div>
<div class="a" style="left:498px;top:670px;width:1px;height:13px;background:#d6cc9c;"></div>
<div class="a" style="left:545px;top:670px;width:1px;height:13px;background:#d6cc9c;"></div>
<div class="t" style="left:118.7px;top:672.8px;font-size:9.2px;color:#444444;transform:scale(0.9924,1.06);transform-origin:0 7.8px;">Перемещение товаров ТД00-000001 от 30.06.2023 16:44:26</div>
<div class="t" style="left:405px;width:44.5px;top:672.8px;font-size:9.2px;color:#444444;text-align:right;transform:scaleY(1.06);transform-origin:0 7.8px">150</div>
<div class="t" style="left:499px;width:44.5px;top:672.8px;font-size:9.2px;color:#444444;text-align:right;transform:scaleY(1.06);transform-origin:0 7.8px">150</div>
<div class="a" style="left:71px;top:683px;width:333px;height:13px;background:#f3ea8b;"></div>
<div class="a" style="left:405px;top:683px;width:46px;height:13px;background:#ffffff;"></div>
<div class="a" style="left:452px;top:683px;width:46px;height:13px;background:#ffffff;"></div>
<div class="a" style="left:499px;top:683px;width:46px;height:13px;background:#f3ea8b;"></div>
<div class="a" style="left:546px;top:683px;width:45px;height:13px;background:#f3ea8b;"></div>
<div class="a" style="left:71px;top:683px;width:333px;height:1px;background:#d6cc9c;"></div>
<div class="a" style="left:405px;top:683px;width:186px;height:1px;background:#d6cc9c;"></div>
<div class="a" style="left:451px;top:683px;width:1px;height:13px;background:#d6cc9c;"></div>
<div class="a" style="left:498px;top:683px;width:1px;height:13px;background:#d6cc9c;"></div>
<div class="a" style="left:545px;top:683px;width:1px;height:13px;background:#d6cc9c;"></div>
<div class="t" style="left:130.7px;top:685.8px;font-size:9.2px;color:#444444;transform:scale(0.9924,1.06);transform-origin:0 7.8px;">Перемещение товаров ТД00-000001 от 30.06.2023 16:44:26</div>
<div class="t" style="left:499px;width:44.5px;top:685.8px;font-size:9.2px;color:#444444;text-align:right;transform:scaleY(1.06);transform-origin:0 7.8px">150</div>
<div class="a" style="left:71px;top:696px;width:333px;height:23px;background:#b5f2f0;"></div>
<div class="a" style="left:405px;top:696px;width:46px;height:23px;background:#b5f2f0;"></div>
<div class="a" style="left:452px;top:696px;width:46px;height:23px;background:#b5f2f0;"></div>
<div class="a" style="left:499px;top:696px;width:46px;height:23px;background:#ffffff;"></div>
<div class="a" style="left:546px;top:696px;width:45px;height:23px;background:#ffffff;"></div>
<div class="a" style="left:71px;top:696px;width:333px;height:1px;background:#d6cc9c;"></div>
<div class="a" style="left:405px;top:696px;width:186px;height:1px;background:#d6cc9c;"></div>
<div class="a" style="left:451px;top:696px;width:1px;height:23px;background:#d6cc9c;"></div>
<div class="a" style="left:498px;top:696px;width:1px;height:23px;background:#d6cc9c;"></div>
<div class="a" style="left:545px;top:696px;width:1px;height:23px;background:#d6cc9c;"></div>
<div class="t" style="left:130.7px;top:697.5px;font-size:9.2px;color:#444444;transform:scale(0.9891,1.06);transform-origin:0 7.8px;">Приходный ордер на товары 00-00000007 от 30.06.2023</div>
<div class="t" style="left:130.7px;top:709.4px;font-size:9.2px;color:#444444;transform:scale(0.9891,1.06);transform-origin:0 7.8px;">16:52:46</div>
<div class="t" style="left:405px;width:44.5px;top:698.8px;font-size:9.2px;color:#444444;text-align:right;transform:scaleY(1.06);transform-origin:0 7.8px">150</div>
<div class="a" style="left:71px;top:719px;width:333px;height:13px;background:#fbf8ec;"></div>
<div class="a" style="left:405px;top:719px;width:46px;height:13px;background:#fbf8ec;"></div>
<div class="a" style="left:452px;top:719px;width:46px;height:13px;background:#fbf8ec;"></div>
<div class="a" style="left:499px;top:719px;width:46px;height:13px;background:#fbf8ec;"></div>
<div class="a" style="left:546px;top:719px;width:45px;height:13px;background:#fbf8ec;"></div>
<div class="a" style="left:71px;top:719px;width:333px;height:1px;background:#d6cc9c;"></div>
<div class="a" style="left:405px;top:719px;width:186px;height:1px;background:#d6cc9c;"></div>
<div class="a" style="left:451px;top:719px;width:1px;height:13px;background:#d6cc9c;"></div>
<div class="a" style="left:498px;top:719px;width:1px;height:13px;background:#d6cc9c;"></div>
<div class="a" style="left:545px;top:719px;width:1px;height:13px;background:#d6cc9c;"></div>
<div class="t" style="left:84.7px;top:721.8px;font-size:9.2px;color:#444444;transform:scale(1.0000,1.06);transform-origin:0 7.8px;">Вентилятор настольный</div>
<div class="t" style="left:405px;width:44.5px;top:721.8px;font-size:9.2px;color:#444444;text-align:right;transform:scaleY(1.06);transform-origin:0 7.8px">150</div>
<div class="t" style="left:499px;width:44.5px;top:721.8px;font-size:9.2px;color:#444444;text-align:right;transform:scaleY(1.06);transform-origin:0 7.8px">150</div>
<div class="tb" style="left:6px;top:240px;"><i></i></div>
<div class="a" style="left:10px;top:249px;width:1px;height:14px;background:#9a9a9a;"></div>
<div class="a" style="left:10px;top:263px;width:60px;height:1px;background:#9a9a9a;"></div>
<div class="tb" style="left:17px;top:253px;"><i></i><b></b></div>
<div class="tb" style="left:6px;top:266px;"><i></i></div>
<div class="a" style="left:10px;top:275px;width:1px;height:12px;background:#9a9a9a;"></div>
<div class="a" style="left:10px;top:287px;width:60px;height:1px;background:#9a9a9a;"></div>
<div class="tb" style="left:17px;top:278px;"><i></i><b></b></div>
<div class="tb" style="left:6px;top:291px;"><i></i></div>
<div class="a" style="left:10px;top:300px;width:1px;height:233px;background:#9a9a9a;"></div>
<div class="a" style="left:10px;top:533px;width:60px;height:1px;background:#9a9a9a;"></div>
<div class="tb" style="left:17px;top:303px;"><i></i></div>
<div class="a" style="left:21px;top:312px;width:1px;height:184px;background:#9a9a9a;"></div>
<div class="a" style="left:21px;top:496px;width:49px;height:1px;background:#9a9a9a;"></div>
<div class="tb" style="left:28px;top:316px;"><i></i></div>
<div class="a" style="left:32px;top:325px;width:1px;height:171px;background:#9a9a9a;"></div>
<div class="tb" style="left:39px;top:328px;"><i></i></div>
<div class="a" style="left:43px;top:337px;width:1px;height:159px;background:#9a9a9a;"></div>
<div class="tb" style="left:50px;top:346px;"><i></i><b></b></div>
<div class="tb" style="left:50px;top:364px;"><i></i><b></b></div>
<div class="tb" style="left:50px;top:377px;"><i></i></div>
<div class="a" style="left:54px;top:386px;width:1px;height:49px;background:#9a9a9a;"></div>
<div class="a" style="left:54px;top:435px;width:16px;height:1px;background:#9a9a9a;"></div>
<div class="tb" style="left:50px;top:438px;"><i></i></div>
<div class="a" style="left:54px;top:447px;width:1px;height:49px;background:#9a9a9a;"></div>
<div class="tb" style="left:17px;top:499px;"><i></i><b></b></div>
<div class="tb" style="left:17px;top:512px;"><i></i><b></b></div>
<div class="tb" style="left:17px;top:524px;"><i></i><b></b></div>
<div class="tb" style="left:6px;top:536px;"><i></i></div>
<div class="a" style="left:10px;top:545px;width:1px;height:180px;background:#9a9a9a;"></div>
<div class="tb" style="left:17px;top:549px;"><i></i></div>
<div class="a" style="left:21px;top:558px;width:1px;height:74px;background:#9a9a9a;"></div>
<div class="a" style="left:21px;top:632px;width:49px;height:1px;background:#9a9a9a;"></div>
<div class="tb" style="left:28px;top:561px;"><i></i></div>
<div class="a" style="left:32px;top:570px;width:1px;height:62px;background:#9a9a9a;"></div>
<div class="tb" style="left:39px;top:574px;"><i></i></div>
<div class="a" style="left:43px;top:583px;width:1px;height:49px;background:#9a9a9a;"></div>
<div class="tb" style="left:50px;top:587px;"><i></i></div>
<div class="a" style="left:54px;top:596px;width:1px;height:36px;background:#9a9a9a;"></div>
<div class="tb" style="left:17px;top:635px;"><i></i></div>
<div class="a" style="left:21px;top:644px;width:1px;height:75px;background:#9a9a9a;"></div>
<div class="a" style="left:21px;top:719px;width:49px;height:1px;background:#9a9a9a;"></div>
<div class="tb" style="left:28px;top:648px;"><i></i></div>
<div class="a" style="left:32px;top:657px;width:1px;height:62px;background:#9a9a9a;"></div>
<div class="tb" style="left:39px;top:661px;"><i></i></div>
<div class="a" style="left:43px;top:670px;width:1px;height:49px;background:#9a9a9a;"></div>
<div class="tb" style="left:50px;top:673px;"><i></i></div>
<div class="a" style="left:54px;top:682px;width:1px;height:37px;background:#9a9a9a;"></div>
<div class="tb" style="left:17px;top:722px;"><i></i><b></b></div>
<div class="a" style="left:799px;top:493px;width:58px;height:18px;border:2px solid #f7c71c;background:#efeff0;box-shadow:inset 0 0 0 1px #fff"></div>
</body></html>
